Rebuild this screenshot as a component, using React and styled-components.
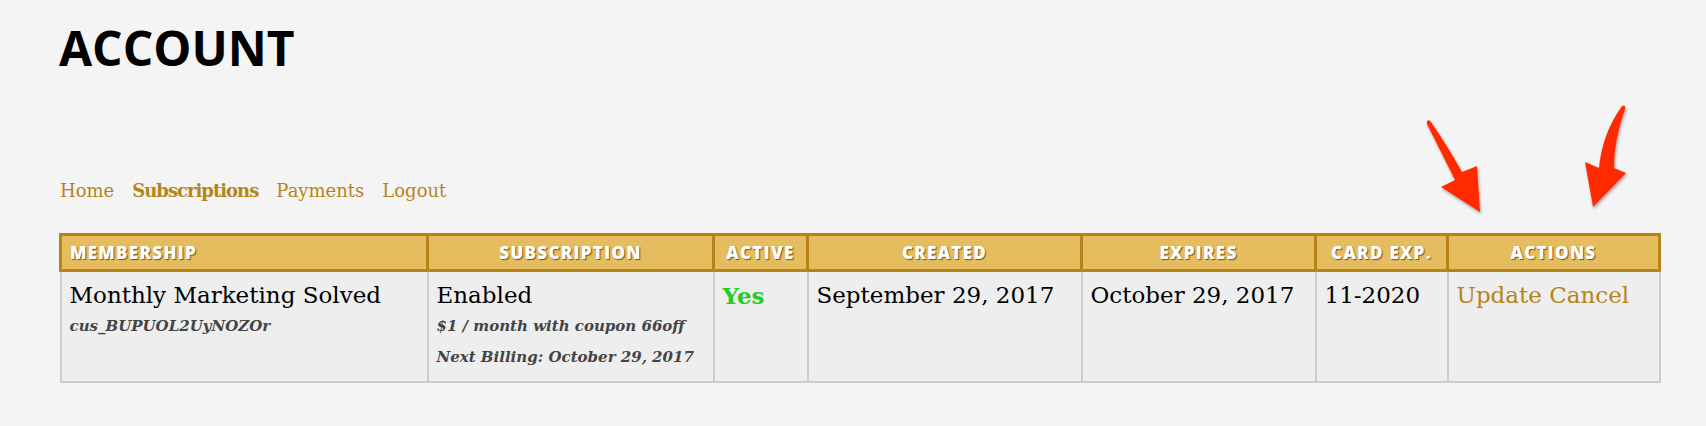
import React from 'react'
import styled, { createGlobalStyle } from 'styled-components'

const GlobalStyle = createGlobalStyle`
  body {
    margin: 0;
    background: #f4f4f4;
    font-family: 'DejaVu Serif', serif;
  }
`

const Page = styled.div`
  position: relative;
  padding: 20px 48px 0 59px;
  height: 426px;
  box-sizing: border-box;
`

const Title = styled.h1`
  margin: 0;
  font-family: 'Open Sans', sans-serif;
  font-weight: 700;
  font-size: 48px;
  line-height: 56px;
  color: #000;
`

const Nav = styled.nav`
  display: flex;
  gap: 18px;
  margin-top: 103px;
  padding-left: 1px;
  font-size: 18px;
  line-height: 24px;
`

const NavLink = styled.a`
  color: #b5851a;
  text-decoration: none;
  font-weight: ${p => (p.$active ? 700 : 400)};
  letter-spacing: ${p => (p.$active ? '-1px' : '0')};
`

const Table = styled.table`
  margin-top: 30px;
  width: 100%;
  border-collapse: collapse;
  table-layout: fixed;
`

const Th = styled.th`
  background: #e5bd5f;
  border: 3px solid #b5831a;
  height: 33px;
  padding: 0 8px;
  text-align: ${p => p.$align || 'center'};
  font-family: 'Open Sans', sans-serif;
  font-weight: 800;
  font-size: 17px;
  letter-spacing: 1.3px;
  color: #fff;
  text-shadow: 1px 1px 1px rgba(80, 50, 0, 0.75);
`

const Td = styled.td`
  background: #eeeeee;
  border: 2px solid #cccccc;
  border-top: none;
  vertical-align: top;
  padding: 8px 8px 0;
  height: 101px;
  font-size: 23px;
  line-height: 31px;
  color: #000;
`

const Sub = styled.div`
  font-size: 15px;
  line-height: 31px;
  font-style: italic;
  font-weight: 700;
  color: #444;
`

const Yes = styled.span`
  color: #22cc22;
  font-weight: 700;
`

const Action = styled.a`
  color: #b5851a;
  text-decoration: none;
`

const Arrows = styled.svg`
  position: absolute;
  left: 0;
  top: 0;
  pointer-events: none;
`

const columns = [
  { label: 'Membership', width: 367, align: 'left' },
  { label: 'Subscription', width: 286 },
  { label: 'Active', width: 94 },
  { label: 'Created', width: 274 },
  { label: 'Expires', width: 234 },
  { label: 'Card Exp.', width: 132 },
  { label: 'Actions', width: 212 }
]

const App = () => (
  <>
    <GlobalStyle />
    <Page>
      <Title>ACCOUNT</Title>
      <Nav>
        <NavLink href='#'>Home</NavLink>
        <NavLink href='#' $active>Subscriptions</NavLink>
        <NavLink href='#'>Payments</NavLink>
        <NavLink href='#'>Logout</NavLink>
      </Nav>
      <Table>
        <colgroup>
          {columns.map(c => (
            <col key={c.label} style={{ width: c.width }} />
          ))}
        </colgroup>
        <thead>
          <tr>
            {columns.map(c => (
              <Th key={c.label} $align={c.align}>
                {c.label.toUpperCase()}
              </Th>
            ))}
          </tr>
        </thead>
        <tbody>
          <tr>
            <Td>
              Monthly Marketing Solved
              <Sub>cus_BUPUOL2UyNOZOr</Sub>
            </Td>
            <Td>
              Enabled
              <Sub>$1 / month with coupon 66off</Sub>
              <Sub>Next Billing: October 29, 2017</Sub>
            </Td>
            <Td>
              <Yes>Yes</Yes>
            </Td>
            <Td>September 29, 2017</Td>
            <Td>October 29, 2017</Td>
            <Td>11-2020</Td>
            <Td>
              <Action href='#'>Update</Action> <Action href='#'>Cancel</Action>
            </Td>
          </tr>
        </tbody>
      </Table>
      <Arrows width='1706' height='426'>
        <defs>
          <filter id='shadow' x='-20%' y='-20%' width='140%' height='140%'>
            <feDropShadow dx='1' dy='2' stdDeviation='1.5' floodColor='#000' floodOpacity='0.35' />
          </filter>
        </defs>
        <g fill='#ff2a00' filter='url(#shadow)'>
          <path d='M1427 121 Q1429 119 1431 122 Q1450 150 1462 172 L1477 166 L1480 212 L1441 187 L1455 180 Q1440 150 1427 124 Z' />
          <path d='M1622 106 Q1626 104 1625 109 Q1614 140 1614 168 L1626 173 L1593 207 L1585 162 L1599 168 Q1602 134 1622 106 Z' />
        </g>
      </Arrows>
    </Page>
  </>
)

export default App
